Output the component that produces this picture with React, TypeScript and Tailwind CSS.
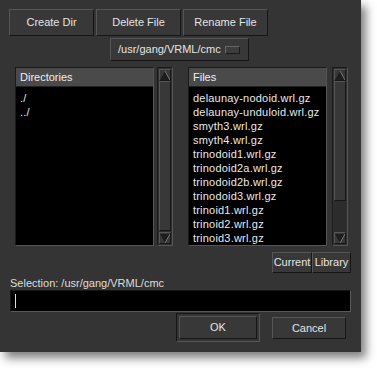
import React from "react";

const raised =
  "border border-t-[#555555] border-l-[#555555] border-b-[#161616] border-r-[#161616] bg-[#383838]";

function Btn({ label, className = "" }: { label: string; className?: string }) {
  return (
    <div className={`${raised} flex items-center justify-center text-[11px] text-[#e4e4e4] ${className}`}>
      {label}
    </div>
  );
}

function ScrollBar({ thumbEnd }: { thumbEnd?: number }) {
  return (
    <div className="w-[16px] h-[179px] border border-t-[#1a1a1a] border-l-[#1a1a1a] border-b-[#555555] border-r-[#555555] bg-[#303030] flex flex-col p-[1px]">
      <div className={`${raised} h-[12px] flex items-center justify-center`}>
        <svg width="10" height="9" viewBox="0 0 10 9">
          <polygon points="5,0 10,9 0,9" fill="#1e1e1e" />
          <line x1="5" y1="0" x2="10" y2="9" stroke="#777" strokeWidth="1" />
        </svg>
      </div>
      <div className="flex-1 flex flex-col">
        <div
          className={`${raised} bg-[#3a3a3a]`}
          style={{ height: thumbEnd ?? 150 }}
        />
        <div className="flex-1 bg-[#2c2c2c]" />
      </div>
      <div className={`${raised} h-[12px] flex items-center justify-center`}>
        <svg width="10" height="9" viewBox="0 0 10 9">
          <polygon points="0,0 10,0 5,9" fill="#1e1e1e" />
          <line x1="10" y1="0" x2="5" y2="9" stroke="#777" strokeWidth="1" />
        </svg>
      </div>
    </div>
  );
}

function ListBox({ title, items }: { title: string; items: string[] }) {
  return (
    <div className="w-[139px] h-[179px] border border-t-[#1a1a1a] border-l-[#1a1a1a] border-b-[#555555] border-r-[#555555] bg-black flex flex-col">
      <div className="h-[19px] bg-[#4a4a4a] border-b border-[#222] flex items-center pl-[4px] text-[11px] text-[#eeeeee]">
        {title}
      </div>
      <div className="flex flex-col pt-[4px] pl-[4px]">
        {items.map((it) => (
          <div key={it} className="h-[14px] leading-[14px] text-[11px] tracking-[0.2px] text-[#e8e8e8] whitespace-nowrap">
            {it}
          </div>
        ))}
      </div>
    </div>
  );
}

export default function App() {
  const files = [
    "delaunay-nodoid.wrl.gz",
    "delaunay-unduloid.wrl.gz",
    "smyth3.wrl.gz",
    "smyth4.wrl.gz",
    "trinodoid1.wrl.gz",
    "trinodoid2a.wrl.gz",
    "trinodoid2b.wrl.gz",
    "trinodoid3.wrl.gz",
    "trinoid1.wrl.gz",
    "trinoid2.wrl.gz",
    "trinoid3.wrl.gz",
  ];
  return (
    <div
      className="w-[377px] h-[368px] bg-white"
      style={{ fontFamily: '"Liberation Sans", Arial, sans-serif' }}
    >
      <div className="w-[361px] h-[352px] bg-[#343434] shadow-[5px_6px_9px_rgba(0,0,0,0.5)] flex flex-col pl-[9px] pt-[9px]">
        <div className="flex gap-[2px]">
          <Btn label="Create Dir" className="w-[85px] h-[27px]" />
          <Btn label="Delete File" className="w-[85px] h-[27px]" />
          <Btn label="Rename File" className="w-[85px] h-[27px]" />
        </div>
        <div className="ml-[101px] mt-[2px] w-[139px] h-[23px] border border-t-[#555555] border-l-[#555555] border-b-[#161616] border-r-[#161616] bg-[#383838] flex items-center pl-[7px] pr-[8px] text-[11px] text-[#e4e4e4]">
          <span className="flex-1">/usr/gang/VRML/cmc</span>
          <div className="w-[15px] h-[8px] border border-t-[#666] border-l-[#666] border-b-[#1a1a1a] border-r-[#1a1a1a] bg-[#3c3c3c]" />
        </div>
        <div className="flex mt-[6px] ml-[6px]">
          <ListBox title="Directories" items={["./", "../"]} />
          <div className="ml-[3px]">
            <ScrollBar />
          </div>
          <div className="ml-[15px]">
            <ListBox title="Files" items={files} />
          </div>
          <div className="ml-[5px]">
            <ScrollBar thumbEnd={120} />
          </div>
        </div>
        <div className="flex justify-end pr-[10px] mt-[6px]">
          <Btn label="Current" className="w-[40px] h-[21px] text-[11px]" />
          <Btn label="Library" className="w-[39px] h-[21px] text-[11px]" />
        </div>
        <div className="text-[11px] text-[#dddddd] leading-[12px] mt-[4px] ml-[1px]">
          Selection: /usr/gang/VRML/cmc
        </div>
        <div className="mt-[1px] ml-[1px] w-[341px] h-[22px] border border-t-[#161616] border-l-[#161616] border-b-[#5a5a5a] border-r-[#5a5a5a] bg-black flex items-center pl-[4px]">
          <div className="w-[1px] h-[14px] bg-[#dddddd]" />
        </div>
        <div className="flex mt-[1px]">
          <div className="ml-[167px] w-[84px] h-[29px] border border-t-[#161616] border-l-[#161616] border-b-[#555555] border-r-[#555555] p-[2px]">
            <Btn label="OK" className="w-full h-full" />
          </div>
          <Btn label="Cancel" className="ml-[12px] mt-[4px] w-[74px] h-[22px]" />
        </div>
      </div>
    </div>
  );
}
